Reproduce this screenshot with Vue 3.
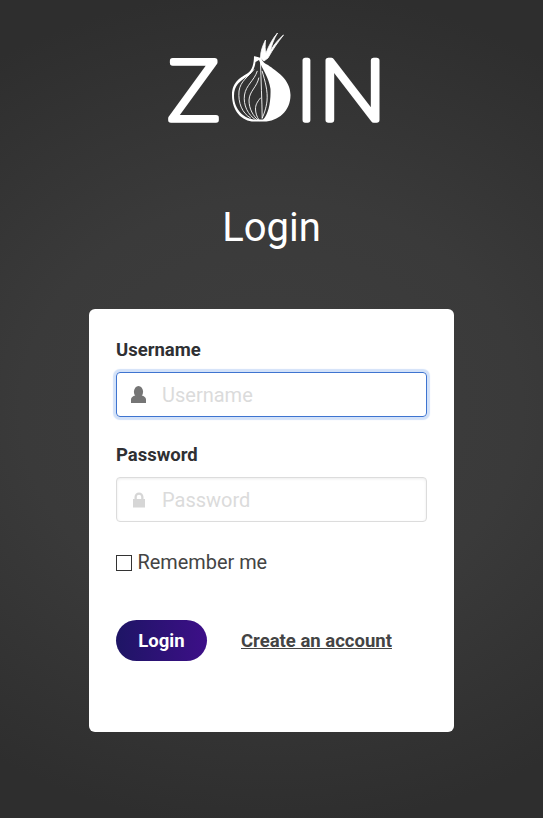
<script setup>
</script>

<template>
  <div class="page">
    <svg class="logo" width="216" height="110" viewBox="0 0 216 110" role="img" aria-label="ZOIN">
      <text x="3" y="89" class="ltr" textLength="53" lengthAdjust="spacingAndGlyphs">Z</text>
      <text x="142.500" y="89" class="ltr mid">I</text>
      <text x="155.500" y="89" class="ltr" textLength="66" lengthAdjust="spacingAndGlyphs">N</text>
      <path fill="#fff" d="M90 25 C92 26 95 26 97 27 C99 31 101 33 104 34 C112 40 126.500 48 126.500 64 C126.500 80 114 90.500 100 90.500 L90 90.500 C78 90.500 68 80 68 64 C68 50 78 46 84 42 C88 39 90 33 90 25 Z"/>
      <path fill="#333" d="M91.500 31 C91 37 88 42 84 45 C76 50 70 54 70 65 C70 78 80 88.500 92 88.500 L99 88.500 C104 84 107 72 106.500 58 C105 46 98 38 95 29 Z"/>
      <g fill="none" stroke="#fff" stroke-width=".9" stroke-linecap="round">
        <path d="M89.800 38.700 C84 46 76.500 50 75 60 C74 72 78 82 86.500 87"/>
        <path d="M93.200 40.300 C90 50 82 54 80.500 64 C79 74 84 84 91.500 88.700"/>
        <path d="M94.800 47 C93 56 85.500 60 85 69 C85 78 89 85 94.800 89.700"/>
        <path d="M96.500 30.300 C97 50 98 70 98.200 87"/>
        <path d="M98.200 40.300 C101 50 104 60 103 70 C102 78 100 83 98.200 87"/>
        <path d="M96.500 67 C93 71 91.500 74 91.500 78 C91.500 82 93 86 94.800 88.700"/>
      </g>
      <path fill="#fff" stroke="#fff" stroke-width=".8" stroke-linejoin="round" d="M96.500 27 C96.500 20 98.500 15 101.500 9 C101 15 101 19 102 22 C105 14 109 7 113.500 2 C110 8 107.500 14 106.500 20 C110 13 115 8 119.500 4 C114 11 109 18 104 27 L100 30 Z"/>
    </svg>

    <h1 class="title">Login</h1>

    <form class="card" @submit.prevent>
      <div class="field">
        <label class="label" for="u">Username</label>
        <div class="control focused">
          <svg class="ico user" width="15" height="17" viewBox="0 0 15 17">
            <ellipse cx="7.500" cy="5.800" rx="4.600" ry="5.800"/>
            <path d="M0 17 V13.500 C0 11.500 2 10 4.200 9.500 C5.500 11 9.500 11 10.800 9.500 C13 10 15 11.500 15 13.500 V17 Z"/>
          </svg>
          <input id="u" class="input" type="text" placeholder="Username" />
        </div>
      </div>

      <div class="field second">
        <label class="label" for="p">Password</label>
        <div class="control">
          <svg class="ico lock" width="14" height="16" viewBox="0 0 14 16">
            <path fill-rule="evenodd" d="M1 7 H2.500 V5 C2.500 2.400 4.500 .5 7 .5 C9.500 .5 11.500 2.400 11.500 5 V7 H13 V15.500 H1 Z M4.800 7 H9.200 V5 C9.200 3.700 8.200 2.800 7 2.800 C5.800 2.800 4.800 3.700 4.800 5 Z"/>
          </svg>
          <input id="p" class="input" type="password" placeholder="Password" />
        </div>
      </div>

      <label class="remember">
        <span class="box"></span>
        <span>Remember me</span>
      </label>

      <div class="actions">
        <button class="btn" type="submit">Login</button>
        <a class="link" href="#">Create an account</a>
      </div>
    </form>
  </div>
</template>

<style>
html, body { margin: 0; background: #2e2e2e; }
</style>

<style scoped>
.page {
  box-sizing: border-box;
  width: 543px;
  height: 818px;
  overflow: hidden;
  padding-top: 31px;
  display: flex;
  flex-direction: column;
  align-items: center;
  font-family: Roboto, "Liberation Sans", sans-serif;
  background: radial-gradient(ellipse 500px 420px at 50% 50%, #3e3e3e 0%, #3a3a3a 50%, #2e2e2e 100%);
}
.logo { display: block; flex: none; }
.ltr {
  font-family: Roboto, sans-serif;
  font-weight: 100;
  font-size: 84px;
  fill: #fff;
  stroke: #fff;
  stroke-width: 5.500px;
  stroke-linejoin: round;
}
.mid { text-anchor: middle; }
.title {
  margin: 64px 0 0;
  height: 46px;
  line-height: 46px;
  font-size: 40px;
  font-weight: 400;
  color: #fff;
}
.card {
  box-sizing: border-box;
  width: 365px;
  height: 423px;
  margin-top: 58px;
  padding: 31px 27px 0;
  background: #fff;
  border-radius: 6px;
  display: flex;
  flex-direction: column;
}
.field { display: flex; flex-direction: column; }
.second { margin-top: 28px; }
.label {
  font-size: 18.500px;
  line-height: 21px;
  font-weight: 700;
  color: #2f3033;
  margin-bottom: 11px;
}
.control {
  box-sizing: border-box;
  height: 45px;
  display: flex;
  align-items: center;
  padding-left: 15px;
  border: 1px solid #dcdcdc;
  border-radius: 4px;
  box-shadow: inset 0 1px 3px rgba(0, 0, 0, .08);
}
.control.focused {
  border-color: #3e74d0;
  box-shadow: 0 0 1px 3px #d3e2f9;
}
.ico { flex: none; }
.user { fill: #757575; margin-left: -1px; margin-right: 16px; }
.lock { fill: #d6d6d6; margin-right: 16px; }
.input {
  flex: 1;
  min-width: 0;
  border: 0;
  outline: 0;
  padding: 0;
  background: transparent;
  font-family: inherit;
  font-size: 20px;
  color: #333;
}
.input::placeholder { color: #dbdbdb; opacity: 1; }
.remember {
  display: flex;
  align-items: center;
  gap: 5.500px;
  margin-top: 29px;
  font-size: 19.900px;
  line-height: 24px;
  color: #444;
}
.box {
  box-sizing: border-box;
  width: 16px;
  height: 16px;
  border: 1px solid #333;
}
.actions {
  display: flex;
  align-items: center;
  gap: 34px;
  margin-top: 45px;
}
.btn {
  width: 91px;
  height: 41px;
  border: 0;
  padding: 0;
  border-radius: 21px;
  background: linear-gradient(90deg, #1e1565, #3d0f88);
  color: #fff;
  font-family: inherit;
  font-size: 18.500px;
  font-weight: 700;
}
.link {
  font-size: 18.500px;
  font-weight: 700;
  color: #444;
  text-decoration: underline;
}
</style>
